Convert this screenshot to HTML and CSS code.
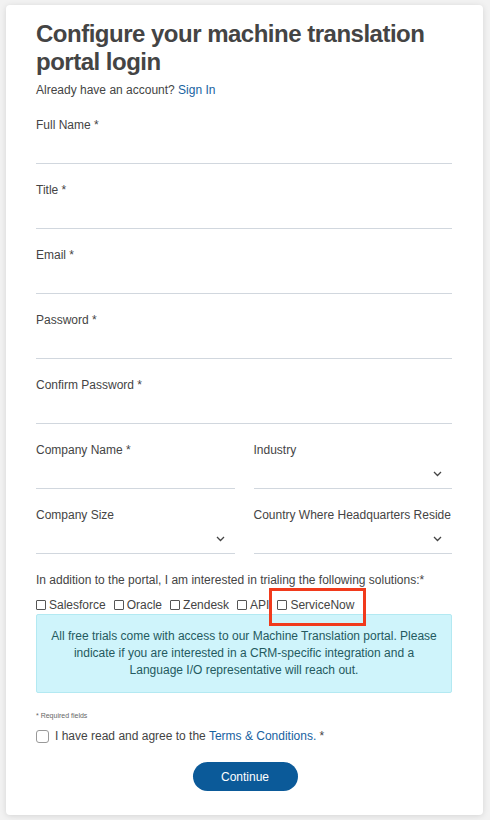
FILE: index.html
```html
<!DOCTYPE html>
<html lang="en">
<head>
  <meta charset="UTF-8" />
  <meta name="viewport" content="width=device-width, initial-scale=1.0"/>
  <title>Configure your machine translation portal login</title>
  <link rel="stylesheet" href="styles.css">
</head>
<body>
  <div class="card">
    <h1>Configure your machine translation portal login</h1>
    <p class="signin">Already have an account? <a href="#">Sign In</a></p>

    <div class="field">
      <label>Full Name *</label>
      <div class="input"></div>
    </div>
    <div class="field">
      <label>Title *</label>
      <div class="input"></div>
    </div>
    <div class="field">
      <label>Email *</label>
      <div class="input"></div>
    </div>
    <div class="field">
      <label>Password *</label>
      <div class="input"></div>
    </div>
    <div class="field">
      <label>Confirm Password *</label>
      <div class="input"></div>
    </div>

    <div class="row">
      <div class="field">
        <label>Company Name *</label>
        <div class="input"></div>
      </div>
      <div class="field">
        <label>Industry</label>
        <div class="input select">
          <svg width="9" height="6" viewBox="0 0 9 6"><polyline points="1,1 4.5,4.5 8,1" fill="none" stroke="#444" stroke-width="1.3"/></svg>
        </div>
      </div>
    </div>
    <div class="row">
      <div class="field">
        <label>Company Size</label>
        <div class="input select">
          <svg width="9" height="6" viewBox="0 0 9 6"><polyline points="1,1 4.5,4.5 8,1" fill="none" stroke="#444" stroke-width="1.3"/></svg>
        </div>
      </div>
      <div class="field">
        <label>Country Where Headquarters Reside</label>
        <div class="input select">
          <svg width="9" height="6" viewBox="0 0 9 6"><polyline points="1,1 4.5,4.5 8,1" fill="none" stroke="#444" stroke-width="1.3"/></svg>
        </div>
      </div>
    </div>

    <p class="interest">In addition to the portal, I am interested in trialing the following solutions:*</p>
    <div class="solutions">
      <span class="opt"><i class="box"></i>Salesforce</span>
      <span class="opt"><i class="box"></i>Oracle</span>
      <span class="opt"><i class="box"></i>Zendesk</span>
      <span class="opt"><i class="box"></i>API</span>
      <span class="opt marked"><i class="box"></i>ServiceNow</span>
    </div>

    <div class="info">
      All free trials come with access to our Machine Translation portal. Please indicate if you are interested in a CRM-specific integration and a Language I/O representative will reach out.
    </div>

    <p class="required">* Required fields</p>
    <div class="terms">
      <i class="tick"></i>
      <span>I have read and agree to the <a href="#">Terms &amp; Conditions.</a> *</span>
    </div>

    <div class="actions">
      <button>Continue</button>
    </div>
  </div>
</body>
</html>
```

FILE: styles.css
```css
* {
  box-sizing: border-box;
}

body {
  margin: 0;
  padding: 5px 7px 5px 6px;
  background: #f2f2f2;
  font-family: 'Liberation Sans', Arial, sans-serif;
  color: #444;
}

.card {
  background: #fff;
  border-radius: 4px;
  box-shadow: 0 1px 6px rgba(0, 0, 0, 0.12);
  padding: 15px 31px 24px 30px;
}

h1 {
  margin: 0;
  font-size: 24px;
  line-height: 28px;
  font-weight: bold;
  color: #444;
  letter-spacing: -0.5px;
}

a {
  color: #17629f;
  text-decoration: none;
}

.signin {
  margin: 6px 0 19px;
  font-size: 12px;
  line-height: 16px;
}

.field {
  margin-bottom: 18px;
}

.field label {
  display: block;
  font-size: 12px;
  line-height: 16px;
}

.input {
  height: 31px;
  border-bottom: 1px solid #d1d7de;
}

.select {
  display: flex;
  align-items: center;
  justify-content: flex-end;
  padding: 2px 10px 0 0;
}

.row {
  display: grid;
  grid-template-columns: 1fr 1fr;
  gap: 19px;
}

.interest {
  margin: 0;
  font-size: 12px;
  line-height: 16px;
}

.solutions {
  display: flex;
  gap: 8px;
  margin-top: 8px;
  font-size: 12px;
  line-height: 16px;
  height: 18px;
}

.opt {
  display: flex;
  align-items: center;
  gap: 3px;
  position: relative;
}

.box {
  display: inline-block;
  width: 10px;
  height: 10px;
  border: 1px solid #555;
  border-radius: 1px;
}

.marked::after {
  content: "";
  position: absolute;
  left: -8px;
  right: -12px;
  top: -8px;
  height: 32px;
  border: 3px solid #f13a1c;
  z-index: 2;
}

.info {
  background: #cff4fb;
  border: 1px solid #b3e9f2;
  border-radius: 2px;
  color: #245a60;
  font-size: 12px;
  line-height: 17px;
  text-align: center;
  padding: 13px 14px;
}

.required {
  margin: 18px 0 0;
  font-size: 7px;
  line-height: 10px;
  color: #666;
}

.terms {
  display: flex;
  align-items: center;
  gap: 6px;
  margin-top: 7px;
  font-size: 12px;
  line-height: 16px;
}

.tick {
  display: inline-block;
  width: 13px;
  height: 13px;
  border: 1px solid #999;
  border-radius: 3px;
}

.actions {
  display: flex;
  justify-content: center;
  margin-top: 18px;
}

button {
  width: 105px;
  height: 29px;
  background: #0b5a99;
  color: #fff;
  border: none;
  border-radius: 15px;
  font-family: 'Liberation Sans', Arial, sans-serif;
  font-size: 12px;
  margin-left: 2px;
}
```
